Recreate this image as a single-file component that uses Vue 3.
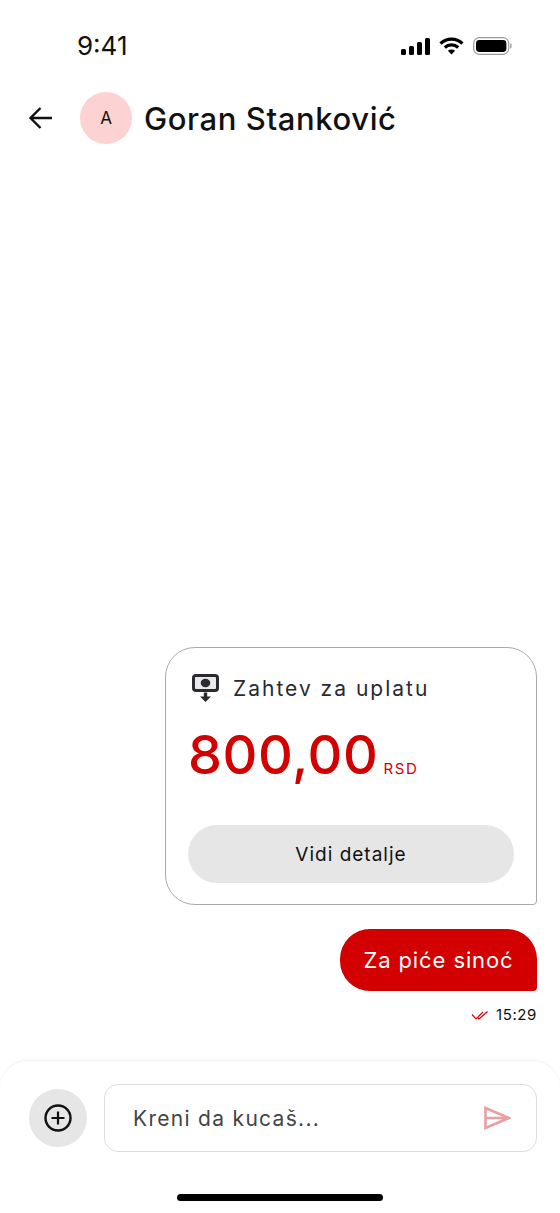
<script setup>
const title = "Goran Stanković"
</script>

<template>
  <div class="screen">
    <div class="status">
      <span class="clock">9:41</span>
      <div class="status-icons">
        <svg width="29" height="17" viewBox="0 0 29 17"><rect x="0" y="11" width="5" height="6" rx="1.5"/><rect x="8" y="8" width="5" height="9" rx="1.5"/><rect x="16" y="4" width="5" height="13" rx="1.5"/><rect x="24" y="0" width="5" height="17" rx="1.5"/></svg>
        <svg width="25" height="18" viewBox="0 0 25 18"><path d="M1.5 6.5C7.8.6 17.2.6 23.5 6.5" class="wifi"/><path d="M5.8 10.5c3.8-3.4 9.6-3.4 13.4 0" class="wifi"/><path d="M12.5 17.5l-3.6-3.7c2-1.7 5.2-1.7 7.2 0z"/></svg>
        <svg width="39" height="18" viewBox="0 0 39 18"><rect x=".7" y=".7" width="35" height="16.6" rx="5.5" fill="none" stroke="#999" stroke-width="1.2"/><rect x="3" y="3" width="30.4" height="12" rx="3.4"/><rect x="37" y="6.5" width="1.6" height="5" rx=".8" fill="#aaa"/></svg>
      </div>
    </div>

    <div class="head">
      <svg class="back" width="26" height="24" viewBox="0 0 26 24"><path d="M24 12H3M12.5 2L2.5 12l10 10" fill="none" stroke="#111" stroke-width="2.4"/></svg>
      <div class="avatar">A</div>
      <div class="name">{{ title }}</div>
    </div>

    <div class="chat">
      <div class="card">
        <div class="card-top">
          <svg width="27" height="29" viewBox="0 0 27 29"><rect x="1.5" y="1.5" width="24" height="15" rx="2.5" fill="#e9e9e9" stroke="#2a2a30" stroke-width="3"/><ellipse cx="13.5" cy="9" rx="4.800" ry="4.200" fill="#2a2a30"/><path d="M11.800 18.500h3.400v4H19l-5.500 5.500L8 22.500h3.800z" fill="#2a2a30"/></svg>
          <span>Zahtev za uplatu</span>
        </div>
        <div class="amount"><span class="sum">800,00</span><span class="cur">RSD</span></div>
        <button class="details">Vidi detalje</button>
      </div>

      <div class="bubble">Za piće sinoć</div>
      <div class="meta">
        <svg width="18" height="11" viewBox="0 0 18 11"><path d="M1 4.500l4 4.500 7-7M7 8l1 1 8.500-7.500" fill="none" stroke="#d40000" stroke-width="1.2"/></svg>
        <span>15:29</span>
      </div>
    </div>

    <div class="composer">
      <div class="row">
        <div class="plus">
          <svg width="30" height="30" viewBox="0 0 30 30"><circle cx="15" cy="15" r="12.500" fill="none" stroke="#111" stroke-width="2.400"/><path d="M15 8.500v13M8.500 15h13" stroke="#111" stroke-width="2.200"/></svg>
        </div>
        <div class="input">
          <span>Kreni da kucaš...</span>
          <svg width="27" height="24" viewBox="0 0 27 24"><path d="M1.500 2L25 12 1.500 22zM1.500 12h23" fill="none" stroke="#e8a0a2" stroke-width="2.600"/></svg>
        </div>
      </div>
      <div class="home"></div>
    </div>
  </div>
</template>

<style>
body { background: #fff; }
</style>

<style scoped>
.screen {
  width: 560px;
  height: 1213px;
  display: flex;
  flex-direction: column;
  background: #fff;
  color: #111;
  font-family: Inter, "Noto Sans", sans-serif;
  overflow: hidden;
}
.status {
  display: flex;
  justify-content: space-between;
  align-items: center;
  padding: 32px 48px 0 77px;
  height: 28px;
}
.clock {
  font-size: 26px;
  font-weight: 400;
  line-height: 28px;
}
.status-icons {
  display: flex;
  align-items: center;
  gap: 9px;
}
.wifi {
  fill: none;
  stroke: #000;
  stroke-width: 3.200;
}
.head {
  display: flex;
  align-items: center;
  margin-top: 32px;
  height: 52px;
  padding-left: 28px;
}
.back { margin-right: 26px; }
.avatar {
  width: 52px;
  height: 52px;
  border-radius: 50%;
  background: #fdd2d2;
  display: flex;
  align-items: center;
  justify-content: center;
  font-size: 17px;
  margin-right: 12px;
}
.name {
  font-size: 31px;
  letter-spacing: .6px;
  font-weight: 500;
}
.chat {
  flex: 1;
  display: flex;
  flex-direction: column;
  align-items: flex-end;
  justify-content: flex-end;
  padding: 0 23px 35px 0;
}
.card {
  width: 372px;
  height: 258px;
  box-sizing: border-box;
  border: 1px solid #aaa;
  border-radius: 30px 30px 4px 30px;
  padding: 22px;
}
.card-top {
  display: flex;
  align-items: center;
  gap: 14px;
  padding-left: 4px;
  height: 36px;
  font-size: 21px;
  letter-spacing: 2px;
  color: #2a2a30;
}
.amount {
  display: flex;
  align-items: baseline;
  margin-top: 14px;
  color: #d20000;
}
.sum {
  font-size: 54px;
  font-weight: 500;
  line-height: 70px;
  letter-spacing: .6px;
}
.cur {
  font-size: 15px;
  margin-left: 5px;
  letter-spacing: 1.600px;
}
.details {
  display: block;
  width: 326px;
  height: 58px;
  margin-top: 35px;
  border: 0;
  border-radius: 29px;
  background: #e6e6e6;
  color: #111;
  font-family: inherit;
  font-size: 19px;
  font-weight: 400;
  letter-spacing: 1px;
}
.bubble {
  margin-top: 24px;
  height: 62px;
  width: 197px;
  box-sizing: border-box;
  background: #d20000;
  color: #fff;
  border-radius: 30px 30px 4px 30px;
  display: flex;
  align-items: center;
  justify-content: center;
  font-size: 22px;
  letter-spacing: .9px;
}
.meta {
  display: flex;
  align-items: center;
  gap: 7px;
  margin-top: 14px;
  font-size: 15px;
  line-height: 20px;
  letter-spacing: .6px;
}
.composer {
  height: 153px;
  box-sizing: border-box;
  border-top: 1px solid #f2f2f2;
  border-radius: 28px 28px 0 0;
  box-shadow: 0 -1px 2px rgba(0, 0, 0, .03);
  padding: 23px 23px 0 29px;
}
.row {
  display: flex;
  align-items: center;
  gap: 17px;
}
.plus {
  width: 58px;
  height: 58px;
  border-radius: 50%;
  background: #e6e6e6;
  display: flex;
  align-items: center;
  justify-content: center;
}
.input {
  flex: 1;
  height: 68px;
  box-sizing: border-box;
  border: 1px solid #ddd;
  border-radius: 14px;
  display: flex;
  align-items: center;
  justify-content: space-between;
  padding: 0 25px 0 28px;
  font-size: 21px;
  letter-spacing: 1.300px;
  color: #444;
}
.home {
  width: 206px;
  height: 7px;
  border-radius: 4px;
  background: #000;
  margin: 42px 0 0 148px;
}
</style>
